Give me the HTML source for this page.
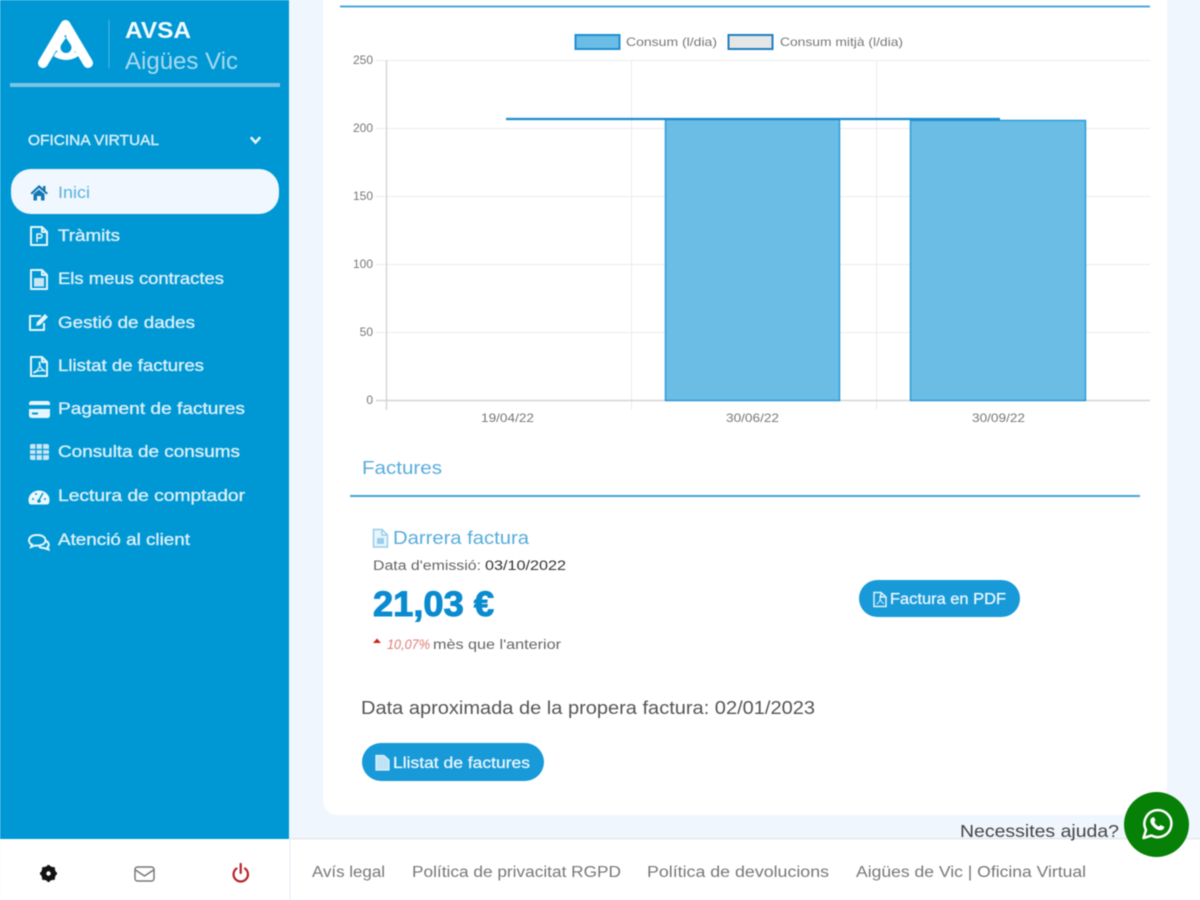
<!DOCTYPE html>
<html lang="ca">
<head>
<meta charset="utf-8">
<title>AVSA Aigües Vic</title>
<style>
html,body{margin:0;padding:0;width:1200px;height:900px;overflow:hidden;background:#f0f6fd}
svg{display:block;position:absolute;left:0;top:0}
text{font-family:"Liberation Sans",sans-serif}
.m{font-size:16.5px;fill:#dcf0f9;stroke:#dcf0f9;stroke-width:.35px}
.g{font-size:12px;fill:#777}
.f{font-size:15.5px;fill:#777}
</style>
</head>
<body>
<svg width="1200" height="900" viewBox="0 0 1200 900" xmlns="http://www.w3.org/2000/svg">
<defs>
<filter id="b" x="-5%" y="-5%" width="110%" height="110%" color-interpolation-filters="sRGB"><feGaussianBlur stdDeviation="0.5"/></filter>
</defs>
<g filter="url(#b)">
<rect width="1200" height="900" fill="#f0f6fd"/>

<!-- Card -->
<rect x="323" y="-20" width="844" height="835" rx="14" fill="#fff"/>
<rect x="340" y="5.500" width="810" height="2" fill="#4ea8dc"/>

<!-- Sidebar -->
<rect x="0" y="0" width="289" height="839" fill="#0098d4"/>
<!-- Logo -->
<path d="M43 63 L65.500 25 L88 63" fill="none" stroke="#fff" stroke-width="10" stroke-linecap="round" stroke-linejoin="round"/>
<path d="M55 54 Q66 61 77 54" fill="none" stroke="#fff" stroke-width="5"/>
<circle cx="66" cy="47" r="10" fill="#fff"/>
<path d="M66 37.500 C68.500 42 71.500 44.500 71.500 47.500 A5.500 5.500 0 0 1 60.500 47.500 C60.500 44.500 63.500 42 66 37.500Z" fill="#0098d4"/>
<rect x="108.500" y="20" width="1" height="48" fill="#4fb5df"/>
<text x="125" y="38" font-size="23" font-weight="700" fill="#f4fbff" textLength="66" lengthAdjust="spacingAndGlyphs">AVSA</text>
<text x="125" y="69" font-size="24" fill="#a9d9f0" textLength="113" lengthAdjust="spacingAndGlyphs">Aigües Vic</text>
<rect x="10" y="83" width="270" height="4" fill="#7cc3e6"/>

<text x="28" y="145" font-size="15" fill="#d8eff9" stroke="#d8eff9" stroke-width=".4" textLength="131" lengthAdjust="spacingAndGlyphs">OFICINA VIRTUAL</text>
<path d="M251.500 138 L255.500 142.500 L259.500 138" fill="none" stroke="#e8f6fc" stroke-width="2.500" stroke-linecap="round"/>

<!-- Active pill -->
<rect x="11" y="169" width="268" height="45" rx="20" fill="#f1f7fe"/>
<path d="M30.500 193 L39 185 L43 188.500 V186 H45.500 V191 L48 193 L46.500 194.500 L39 188 L32 194.500Z M33.500 194 L39 189.500 L44.500 194 V200.500 H41 V196 H37 V200.500 H33.500Z" fill="#1278b4"/>
<text x="58" y="198" font-size="16.500" fill="#5ab2df" textLength="32" lengthAdjust="spacingAndGlyphs">Inici</text>

<!-- Menu items -->
<g fill="none" stroke="#e6f5fc" stroke-width="2" stroke-linejoin="round">
<path d="M31 227 H42 L47 232 V245 H31Z M42 227 V232 H47"/>
<path d="M37 242 V234 H40 A2 2 0 0 1 40 238 H37" stroke-width="1.500"/>
<path d="M31 270 H42 L47 275 V289 H31Z M42 270 V275 H47"/>
<rect x="34" y="278" width="10" height="8.500" fill="#c9e6f5" stroke="none"/>
<path d="M44 323 V330 H30 V316 H41"/>
<path d="M36 326 L37 322 L45 314 L48 317 L40 325Z" fill="#e6f5fc" stroke="none"/>
<path d="M31 357 H42 L47 362 V376 H31Z M42 357 V362 H47"/>
<path d="M34 372 C38 371 41 365 39.500 362 C38 364 42 370 45 371 C41 370 37 371 34 373Z" stroke-width="1.200"/>
</g>
<rect x="29" y="401" width="21" height="17" rx="2.500" fill="#e6f5fc"/>
<rect x="29" y="405" width="21" height="4" fill="#0098d4"/>
<rect x="32" y="412.500" width="6" height="2" fill="#0098d4"/>
<rect x="30" y="444" width="19" height="16" rx="2" fill="#c9e6f5"/>
<path d="M30 449.500 H49 M30 454.500 H49 M36 444 V460 M42.500 444 V460" stroke="#0098d4" stroke-width="1.200"/>
<path d="M29 500 A10 9 0 0 1 49 500 Q49 504 47 504 H31 Q29 504 29 500Z" fill="#ecf8fd" stroke="#ecf8fd" stroke-width="1"/>
<path d="M39 500 L43 493" stroke="#0098d4" stroke-width="1.500"/>
<circle cx="39" cy="501" r="1.800" fill="#0098d4"/><circle cx="33" cy="499" r="1" fill="#0098d4"/><circle cx="36" cy="494" r="1" fill="#0098d4"/><circle cx="45" cy="499" r="1" fill="#0098d4"/>
<path d="M37 535 C31 535 29 538 29 540.500 C29 542.500 30.500 544 32 544.500 L31 547 L35 545.500 C41 546 45.500 544 45.500 540.500 C45.500 537 42 535 37 535Z" fill="none" stroke="#e6f5fc" stroke-width="2"/>
<path d="M46 541 C49 542 49.500 546 47.500 547 L48.500 549.500 L44 548 C42 548 40 547.500 39 546.500" fill="none" stroke="#e6f5fc" stroke-width="2"/>

<text class="m" x="58" y="241" textLength="62" lengthAdjust="spacingAndGlyphs">Tràmits</text>
<text class="m" x="58" y="284" textLength="166" lengthAdjust="spacingAndGlyphs">Els meus contractes</text>
<text class="m" x="58" y="328" textLength="137" lengthAdjust="spacingAndGlyphs">Gestió de dades</text>
<text class="m" x="58" y="371" textLength="146" lengthAdjust="spacingAndGlyphs">Llistat de factures</text>
<text class="m" x="58" y="414" textLength="187" lengthAdjust="spacingAndGlyphs">Pagament de factures</text>
<text class="m" x="58" y="457" textLength="182" lengthAdjust="spacingAndGlyphs">Consulta de consums</text>
<text class="m" x="58" y="501" textLength="187" lengthAdjust="spacingAndGlyphs">Lectura de comptador</text>
<text class="m" x="58" y="545" textLength="132" lengthAdjust="spacingAndGlyphs">Atenció al client</text>

<!-- Chart legend -->
<rect x="575.500" y="35" width="44" height="14" fill="#6bbde5" stroke="#1c8fd2" stroke-width="2"/>
<text class="g" x="626" y="46" textLength="91" lengthAdjust="spacingAndGlyphs">Consum (l/dia)</text>
<rect x="728.500" y="35" width="44" height="14" fill="#e6e6e6" stroke="#1c7fc0" stroke-width="2"/>
<text class="g" x="780" y="46" textLength="123" lengthAdjust="spacingAndGlyphs">Consum mitjà (l/dia)</text>

<!-- Grid -->
<g stroke="#ececec" stroke-width="1">
<path d="M376 60.500 H1150 M376 128.500 H1150 M376 196.500 H1150 M376 264.500 H1150 M376 332.500 H1150"/>
<path d="M631.500 60 V410 M876.500 60 V410"/>
</g>
<path d="M386.500 60 V410 M376 400.500 H1150" stroke="#d4d4d4" stroke-width="1.400" fill="none"/>
<text class="g" x="373" y="64" text-anchor="end">250</text>
<text class="g" x="373" y="132" text-anchor="end">200</text>
<text class="g" x="373" y="200" text-anchor="end">150</text>
<text class="g" x="373" y="268" text-anchor="end">100</text>
<text class="g" x="373" y="336" text-anchor="end">50</text>
<text class="g" x="373" y="404" text-anchor="end">0</text>
<text class="g" x="481" y="422" textLength="53" lengthAdjust="spacingAndGlyphs">19/04/22</text>
<text class="g" x="726" y="422" textLength="53" lengthAdjust="spacingAndGlyphs">30/06/22</text>
<text class="g" x="972" y="422" textLength="53" lengthAdjust="spacingAndGlyphs">30/09/22</text>

<!-- Bars -->
<rect x="665.500" y="119.500" width="174" height="281" fill="#6cbde5" stroke="#2b9bd7" stroke-width="1.500"/>
<rect x="910.500" y="120.500" width="175" height="280" fill="#6cbde5" stroke="#2b9bd7" stroke-width="1.500"/>
<path d="M506 119 H1000" stroke="#1a8cd0" stroke-width="2.200" fill="none"/>

<!-- Factures -->
<text x="362" y="474" font-size="18" fill="#58acdc" textLength="80" lengthAdjust="spacingAndGlyphs">Factures</text>
<rect x="350" y="495" width="790" height="2" fill="#45a4da"/>

<path d="M373.500 529.500 H382 L387.500 535 V547 H373.500Z M382 529.500 V535 H387.500" fill="#eaf5fb" stroke="#98cfea" stroke-width="1.500"/>
<rect x="377" y="538" width="7" height="6" fill="#98cfea"/>
<text x="393" y="544" font-size="18" fill="#58acdc" textLength="136" lengthAdjust="spacingAndGlyphs">Darrera factura</text>
<text x="373" y="570" font-size="13.500" fill="#666" textLength="108" lengthAdjust="spacingAndGlyphs">Data d'emissió:</text>
<text x="485" y="570" font-size="13.500" fill="#333" textLength="81" lengthAdjust="spacingAndGlyphs">03/10/2022</text>
<text x="373" y="616" font-size="35" font-weight="700" fill="#0a8bd0" stroke="#0a8bd0" stroke-width="1" textLength="121" lengthAdjust="spacingAndGlyphs">21,03 €</text>
<path d="M373 643 L377 638.500 L381 643Z" fill="#c9241c"/>
<text x="387" y="649" font-size="14" font-style="italic" fill="#e07a78" textLength="43" lengthAdjust="spacingAndGlyphs">10,07%</text>
<text x="433" y="649" font-size="14" fill="#666" textLength="128" lengthAdjust="spacingAndGlyphs">mès que l'anterior</text>

<text x="361" y="714" font-size="18" fill="#555" textLength="454" lengthAdjust="spacingAndGlyphs">Data aproximada de la propera factura: 02/01/2023</text>

<!-- Buttons -->
<rect x="859" y="580" width="161" height="37" rx="18.500" fill="#1899d8"/>
<path d="M874 592.500 H881 L886 597 V606.500 H874Z M881 592.500 V597 H886" fill="none" stroke="#dff2fb" stroke-width="1.500"/>
<path d="M876.500 604 C879 603 881 599 880 596.500 C879.500 599 881.500 603 884 603.500" fill="none" stroke="#dff2fb" stroke-width="1"/>
<text x="890" y="604" font-size="16" fill="#eaf7fd" stroke="#eaf7fd" stroke-width=".3" textLength="116" lengthAdjust="spacingAndGlyphs">Factura en PDF</text>

<rect x="362" y="743" width="182" height="38" rx="19" fill="#1899d8"/>
<path d="M376 755.500 H384 L389 760 V770 H376Z" fill="#bfe3f5" stroke="#dff2fb" stroke-width="1.200"/>
<text x="393" y="768" font-size="16" fill="#eaf7fd" stroke="#eaf7fd" stroke-width=".3" textLength="137" lengthAdjust="spacingAndGlyphs">Llistat de factures</text>

<!-- Footer -->
<rect x="0" y="839" width="1200" height="61" fill="#fff"/>
<rect x="290" y="838" width="910" height="1.500" fill="#e5e9ec"/>
<rect x="289.500" y="839" width="1" height="61" fill="#e4ebf3"/>
<circle cx="48.500" cy="873.500" r="5.500" fill="none" stroke="#111" stroke-width="4"/>
<path d="M48.500 865 V882 M40 873.500 H57 M42.500 867.500 L54.500 879.500 M54.500 867.500 L42.500 879.500" stroke="#111" stroke-width="2.500"/>
<circle cx="48.500" cy="873.500" r="2.200" fill="#fff"/>
<rect x="135" y="867" width="19" height="14" rx="2.500" fill="none" stroke="#777" stroke-width="1.500"/>
<path d="M135.500 870 L144.500 876 L153.500 870" fill="none" stroke="#777" stroke-width="1.500"/>
<path d="M236.500 868.500 A7.200 7.200 0 1 0 245 868.500" fill="none" stroke="#b8232a" stroke-width="2.200" stroke-linecap="round"/>
<path d="M240.700 864 V873" stroke="#b8232a" stroke-width="2.200" stroke-linecap="round"/>

<text class="f" x="312" y="877" textLength="73" lengthAdjust="spacingAndGlyphs">Avís legal</text>
<text class="f" x="412" y="877" textLength="209" lengthAdjust="spacingAndGlyphs">Política de privacitat RGPD</text>
<text class="f" x="647" y="877" textLength="182" lengthAdjust="spacingAndGlyphs">Política de devolucions</text>
<text class="f" x="856" y="877" textLength="230" lengthAdjust="spacingAndGlyphs">Aigües de Vic | Oficina Virtual</text>

<!-- WhatsApp -->
<text x="960" y="837" font-size="17.500" fill="#444" textLength="159" lengthAdjust="spacingAndGlyphs">Necessites ajuda?</text>
<circle cx="1156.500" cy="824.500" r="32.500" fill="#068006"/>
<path d="M1143.500 838 L1146 830 A13.500 13.500 0 1 1 1151.500 835.500Z" fill="none" stroke="#fff" stroke-width="2.500" stroke-linejoin="round"/>
<path d="M1151.500 818 C1149.500 820 1150 823 1153 826.300 C1156 829.500 1159 831 1162 830 C1163.800 829.300 1164.300 827.800 1164.300 826.800 L1160.500 825 L1158.800 826.600 C1156.800 825.700 1155 824 1154.300 822 L1155.500 820.300 L1153.800 817Z" fill="#fff"/>
</g>
</svg>
</body>
</html>
